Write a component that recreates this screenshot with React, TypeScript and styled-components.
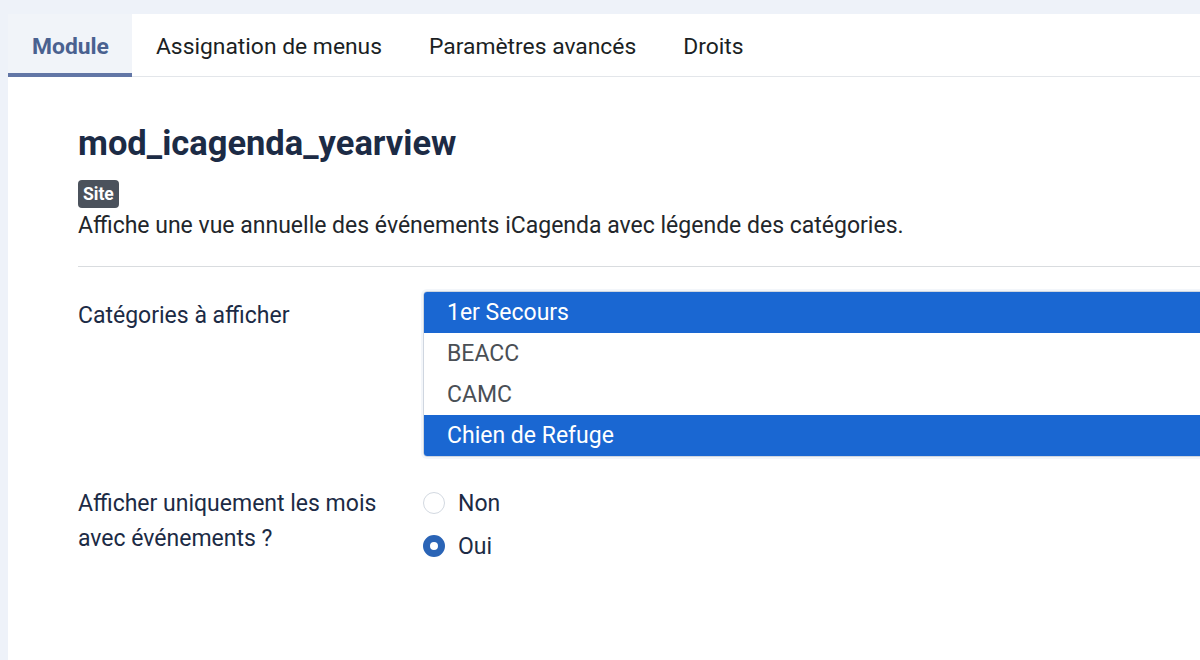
import { useState } from "react";
import styled, { createGlobalStyle } from "styled-components";

const GlobalStyle = createGlobalStyle`
  html, body {
    margin: 0;
    padding: 0;
    background: #eef2f9;
    font-family: Roboto, "Noto Sans", "Liberation Sans", sans-serif;
    overflow: hidden;
  }
`;

const Page = styled.div`
  width: 1200px;
  height: 660px;
  padding: 14px 0 0 8px;
  box-sizing: border-box;
`;

const Card = styled.div`
  background: #ffffff;
  height: 100%;
  display: flex;
  flex-direction: column;
`;

const TabBar = styled.div`
  display: flex;
  height: 63px;
  border-bottom: 1px solid #e3e6ea;
  box-sizing: border-box;
`;

const Tab = styled.button<{ $active?: boolean }>`
  border: none;
  margin: 0;
  padding: 6px 23px 0 24px;
  height: 63px;
  box-sizing: border-box;
  font-family: inherit;
  font-size: 22.85px;
  font-weight: ${(p) => (p.$active ? 700 : 400)};
  color: ${(p) => (p.$active ? "#4a6190" : "#1b1f24")};
  background: ${(p) => (p.$active ? "#f1f4f9" : "transparent")};
  border-bottom: 4px solid ${(p) => (p.$active ? "#6276a6" : "transparent")};
  cursor: pointer;
`;

const Body = styled.div`
  padding: 47px 0 0 70px;
`;

const Title = styled.h1`
  margin: 0;
  font-size: 34.5px;
  font-weight: 700;
  color: #1c2b45;
  line-height: 38px;
`;

const Badge = styled.span`
  display: inline-block;
  margin-top: 18px;
  background: #4b525c;
  color: #ffffff;
  font-size: 17.5px;
  font-weight: 700;
  padding: 4px 5px;
  border-radius: 4px;
  line-height: 20px;
`;

const Description = styled.p`
  margin: 4px 0 0;
  font-size: 23px;
  color: #22262b;
  line-height: 28px;
`;

const Divider = styled.hr`
  margin: 26px 0 0;
  border: none;
  border-top: 1px solid #d9dcdf;
`;

const Row = styled.div<{ $gap: number }>`
  display: grid;
  grid-template-columns: 345px 1fr;
  margin-top: ${(p) => p.$gap}px;
`;

const Label = styled.div`
  font-size: 23px;
  line-height: 35px;
  color: #1c2b45;
  padding-top: 9px;
`;

const Select = styled.div`
  margin-top: 2px;
  border: 1px solid #cfd6e0;
  border-radius: 4px;
  overflow: hidden;
  margin-right: -20px;
  box-shadow: 0 0 0 2px #f3f6fa;
`;

const Option = styled.div<{ $selected?: boolean }>`
  height: 41px;
  line-height: 41px;
  padding-left: 23px;
  font-size: 23px;
  color: ${(p) => (p.$selected ? "#ffffff" : "#4a4f55")};
  background: ${(p) => (p.$selected ? "#1a67d2" : "#ffffff")};
  cursor: default;
`;

const RadioGroup = styled.div`
  display: flex;
  flex-direction: column;
  gap: 9px;
  padding-top: 9px;
`;

const RadioRow = styled.label`
  display: flex;
  align-items: center;
  gap: 13px;
  font-size: 23px;
  color: #1c2b45;
  height: 34px;
  cursor: pointer;
`;

const RadioDot = styled.span<{ $checked?: boolean }>`
  width: 22px;
  height: 22px;
  border-radius: 50%;
  box-sizing: border-box;
  background: #ffffff;
  border: ${(p) => (p.$checked ? "7px solid #2a64b6" : "1px solid #d3d9e1")};
`;

const categories = ["1er Secours", "BEACC", "CAMC", "Chien de Refuge"];
const tabs = ["Module", "Assignation de menus", "Paramètres avancés", "Droits"];

export default function App() {
  const [selected, setSelected] = useState<string[]>(["1er Secours", "Chien de Refuge"]);
  const [onlyWithEvents, setOnlyWithEvents] = useState(true);

  const toggle = (c: string) =>
    setSelected((s) => (s.includes(c) ? s.filter((x) => x !== c) : [...s, c]));

  return (
    <>
      <GlobalStyle />
      <Page>
        <Card>
          <TabBar>
            {tabs.map((t, i) => (
              <Tab key={t} $active={i === 0}>
                {t}
              </Tab>
            ))}
          </TabBar>
          <Body>
            <Title>mod_icagenda_yearview</Title>
            <Badge>Site</Badge>
            <Description>
              Affiche une vue annuelle des événements iCagenda avec légende des catégories.
            </Description>
            <Divider />
            <Row $gap={22}>
              <Label>Catégories à afficher</Label>
              <Select>
                {categories.map((c) => (
                  <Option key={c} $selected={selected.includes(c)} onClick={() => toggle(c)}>
                    {c}
                  </Option>
                ))}
              </Select>
            </Row>
            <Row $gap={20}>
              <Label>
                Afficher uniquement les mois
                <br />
                avec événements ?
              </Label>
              <RadioGroup>
                <RadioRow onClick={() => setOnlyWithEvents(false)}>
                  <RadioDot $checked={!onlyWithEvents} />
                  Non
                </RadioRow>
                <RadioRow onClick={() => setOnlyWithEvents(true)}>
                  <RadioDot $checked={onlyWithEvents} />
                  Oui
                </RadioRow>
              </RadioGroup>
            </Row>
          </Body>
        </Card>
      </Page>
    </>
  );
}
